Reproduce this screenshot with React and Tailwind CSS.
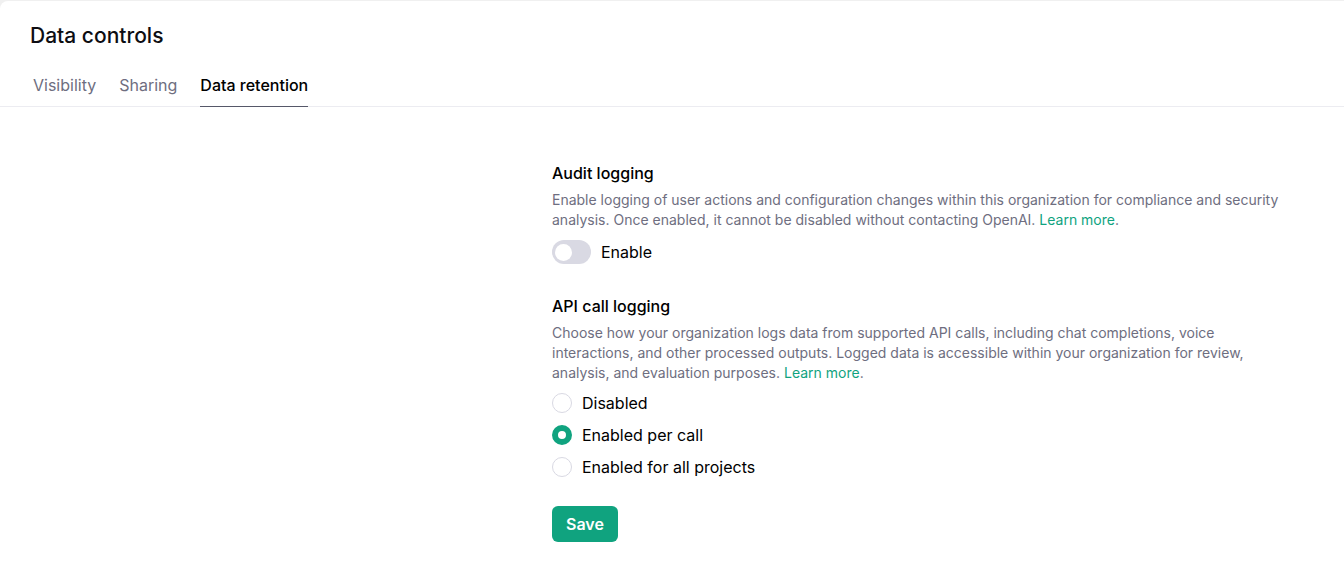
const options = [
  { id: "disabled", label: "Disabled" },
  { id: "per-call", label: "Enabled per call" },
  { id: "all-projects", label: "Enabled for all projects" },
];

function Tab({ active, children }) {
  return (
    <a
      href="#"
      aria-current={active ? "page" : undefined}
      className={
        active
          ? "border-b border-[#565869] pb-[9px] font-medium text-black"
          : "border-b border-transparent pb-[9px] text-[#6e6e80]"
      }
    >
      {children}
    </a>
  );
}

function LearnMore() {
  return (
    <a href="#" className="text-[#10a37f]">
      Learn more
    </a>
  );
}

export default function App() {
  return (
    <div className="min-h-screen bg-[#f0f0f0] pt-px font-['Inter',sans-serif] text-base leading-6 text-black">
      <main className="min-h-screen rounded-tl-lg bg-white">
        <header className="border-b border-[#ececf1] pt-[21px]">
          <h1 className="px-[30px] text-[21px] leading-7 font-medium text-[#0d0d12]">Data controls</h1>
          <nav className="-mb-px flex gap-[23px] px-[33px] pt-[23px]">
            <Tab>Visibility</Tab>
            <Tab>Sharing</Tab>
            <Tab active>Data retention</Tab>
          </nav>
        </header>

        <form className="ml-[552px] pt-[54px] pr-12" onSubmit={(e) => e.preventDefault()}>
          <section>
            <h2 className="font-medium">Audit logging</h2>
            <p className="mt-[5px] text-sm leading-5 text-[#6e6e80]">
              Enable logging of user actions and configuration changes within this organization for compliance and security analysis. Once enabled, it cannot be disabled without contacting OpenAI. <LearnMore />.
            </p>
            <label className="mt-2.5 flex w-fit items-center gap-2.5">
              <input
                type="checkbox"
                role="switch"
                className="flex h-6 w-[39px] appearance-none items-center rounded-full bg-[#d9d9e3] px-[3px] before:size-[17px] before:rounded-full before:bg-white checked:justify-end checked:bg-[#10a37f]"
              />
              Enable
            </label>
          </section>

          <section className="mt-[30px]">
            <h2 className="font-medium">API call logging</h2>
            <p className="mt-[5px] text-sm leading-5 text-[#6e6e80]">
              Choose how your organization logs data from supported API calls, including chat completions, voice interactions, and other processed outputs. Logged data is accessible within your organization for review, analysis, and evaluation purposes. <LearnMore />.
            </p>
            <div className="mt-2 flex flex-col gap-2">
              {options.map(({ id, label }) => (
                <label key={id} className="flex w-fit items-center gap-2.5">
                  <input
                    type="radio"
                    name="api-logging"
                    value={id}
                    defaultChecked={id === "per-call"}
                    className="size-5 appearance-none rounded-full border border-[#d9d9e3] bg-white checked:border-[6px] checked:border-[#10a37f]"
                  />
                  {label}
                </label>
              ))}
            </div>
          </section>

          <button type="submit" className="mt-[27px] rounded-md bg-[#10a37f] px-3.5 py-1.5 font-semibold text-white">
            Save
          </button>
        </form>
      </main>
    </div>
  );
}
